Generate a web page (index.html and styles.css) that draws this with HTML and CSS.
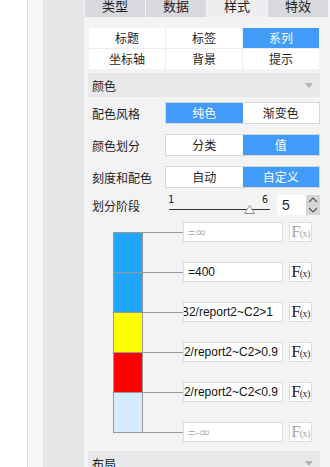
FILE: index.html
```html
<!DOCTYPE html>
<html lang="zh">
<head>
    <meta charset="UTF-8">
    <title>样式 - 系列</title>
    <link rel="stylesheet" href="styles.css">
</head>
<body>
    <div class="rail rail-white"></div>
    <div class="rail rail-rule"></div>
    <div class="rail rail-light"></div>
    <div class="rail rail-gray"></div>

    <div class="panel">
        <div class="tabs">
            <div class="tab">类型</div>
            <div class="tab">数据</div>
            <div class="tab active">样式</div>
            <div class="tab">特效</div>
        </div>

        <div class="panel-body">
            <div class="sub-tabs">
                <div class="sub-tab">标题</div>
                <div class="sub-tab">标签</div>
                <div class="sub-tab active">系列</div>
                <div class="sub-tab">坐标轴</div>
                <div class="sub-tab">背景</div>
                <div class="sub-tab">提示</div>
            </div>

            <div class="section-head">
                <span>颜色</span>
                <span class="caret"></span>
            </div>

            <div class="form-row">
                <span class="form-label">配色风格</span>
                <div class="toggle">
                    <span class="toggle-item active">纯色</span>
                    <span class="toggle-item">渐变色</span>
                </div>
            </div>
            <div class="form-row">
                <span class="form-label">颜色划分</span>
                <div class="toggle">
                    <span class="toggle-item">分类</span>
                    <span class="toggle-item active">值</span>
                </div>
            </div>
            <div class="form-row">
                <span class="form-label">刻度和配色</span>
                <div class="toggle">
                    <span class="toggle-item">自动</span>
                    <span class="toggle-item active">自定义</span>
                </div>
            </div>

            <div class="form-row stage-row">
                <span class="form-label">划分阶段</span>
                <div class="slider">
                    <span class="slider-min">1</span>
                    <span class="slider-max">6</span>
                    <div class="slider-track"></div>
                    <svg class="slider-thumb" width="11" height="9" viewBox="0 0 11 9">
                        <polygon points="5.5,0.5 10.5,8.5 0.5,8.5" fill="#fff" stroke="#8c8c8c"/>
                    </svg>
                </div>
                <div class="spin">
                    <span class="spin-value">5</span>
                    <div class="spin-btns">
                        <svg width="14" height="20" viewBox="0 0 14 20">
                            <polyline points="3,7 7,3 11,7" fill="none" stroke="#555" stroke-width="1.1"/>
                            <polyline points="3,13 7,17 11,13" fill="none" stroke="#555" stroke-width="1.1"/>
                        </svg>
                    </div>
                </div>
            </div>

            <div class="legend">
                <div class="legend-bar">
                    <div class="seg seg-blue"></div>
                    <div class="seg seg-blue"></div>
                    <div class="seg seg-yellow"></div>
                    <div class="seg seg-red"></div>
                    <div class="seg seg-pale"></div>
                </div>
                <div class="legend-stops">
                    <div class="stop">
                        <span class="connector"></span>
                        <div class="stop-input placeholder">=<span class="inf">∞</span></div>
                        <div class="fx disabled">F<small>(x)</small></div>
                    </div>
                    <div class="stop">
                        <span class="connector"></span>
                        <div class="stop-input">=400</div>
                        <div class="fx">F<small>(x)</small></div>
                    </div>
                    <div class="stop">
                        <span class="connector"></span>
                        <div class="stop-input scrolled wide-pad">=B2/report2~C2&gt;1</div>
                        <div class="fx">F<small>(x)</small></div>
                    </div>
                    <div class="stop">
                        <span class="connector"></span>
                        <div class="stop-input scrolled">=B2/report2~C2&gt;0.9</div>
                        <div class="fx">F<small>(x)</small></div>
                    </div>
                    <div class="stop">
                        <span class="connector"></span>
                        <div class="stop-input scrolled">=B2/report2~C2&lt;0.9</div>
                        <div class="fx">F<small>(x)</small></div>
                    </div>
                    <div class="stop">
                        <span class="connector"></span>
                        <div class="stop-input placeholder">=-<span class="inf">∞</span></div>
                        <div class="fx disabled">F<small>(x)</small></div>
                    </div>
                </div>
            </div>

            <div class="section-head layout-head">
                <span>布局</span>
                <span class="caret"></span>
            </div>
        </div>
    </div>
</body>
</html>
```

FILE: styles.css
```css
body {
    margin: 0;
    padding: 0;
    display: flex;
    height: 467px;
    overflow: hidden;
    background: #fff;
    color: #1e1e1e;
    font-family: "Noto Sans CJK SC", "Liberation Sans", sans-serif;
    font-size: 12px;
}

/* left frame strips */
.rail {
    flex: none;
    height: 100%;
}
.rail-white { width: 27px; background: #fff; }
.rail-rule  { width: 1px;  background: #dedfd8; }
.rail-light { width: 15px; background: #f7f7f5; }
.rail-gray  { width: 41px; background: #e6e6e6; }

.panel {
    flex: 1;
    background: #f3f3f5;
    overflow: hidden;
}

/* top tabs, scrolled partly out of view */
.tabs {
    display: grid;
    grid-template-columns: repeat(4, 60px);
    gap: 1px;
    padding-left: 1px;
    margin-top: -6px;
    height: 23px;
}
.tab {
    background: #d8d9dc;
    text-align: center;
    line-height: 23px;
    font-size: 13px;
}
.tab.active {
    background: #eeeef0;
}

.panel-body {
    padding: 0 10px 0 4px;
}

.sub-tabs {
    display: grid;
    grid-template-columns: repeat(3, 76px);
    grid-auto-rows: 20px;
    gap: 1px;
    margin: 11px 1px 0 1px;
    background: #ececee;
}
.sub-tab {
    background: #fff;
    text-align: center;
    line-height: 20px;
}
.sub-tab.active {
    background: #419bf8;
    color: #fff;
}

.section-head {
    display: flex;
    justify-content: space-between;
    align-items: center;
    height: 24px;
    margin-top: 4px;
    padding-left: 4px;
    background: #e8e8ea;
}
.caret {
    width: 0;
    height: 0;
    margin-right: 7px;
    border-left: 4px solid transparent;
    border-right: 4px solid transparent;
    border-top: 5px solid #b4b4b6;
}
.layout-head {
    margin-top: 9px;
}

.form-row {
    display: flex;
    align-items: center;
    height: 22px;
    margin-top: 10px;
    padding-left: 4px;
}
.section-head + .form-row {
    margin-top: 5px;
}
.form-label {
    width: 73px;
    flex: none;
}

.toggle {
    display: grid;
    grid-template-columns: 1fr 1fr;
    width: 155px;
    height: 22px;
    box-sizing: border-box;
    border: 1px solid #d6d6d8;
    background: #fff;
}
.toggle-item {
    text-align: center;
    line-height: 20px;
}
.toggle-item.active {
    background: #419bf8;
    color: #fff;
}

/* stage slider + number spinner */
.stage-row {
    margin-top: 7px;
    height: 20px;
}
.slider {
    position: relative;
    width: 102px;
    height: 20px;
    margin-left: 3px;
}
.slider-min,
.slider-max {
    position: absolute;
    top: 0;
    font-family: "DejaVu Sans Mono", monospace;
    font-size: 10px;
    line-height: 10px;
}
.slider-min { left: 0; }
.slider-max { right: 2px; }
.slider-track {
    position: absolute;
    left: 1px;
    right: 0;
    top: 14px;
    height: 1px;
    background: #333;
}
.slider-thumb {
    position: absolute;
    left: 76px;
    top: 10px;
}
.spin {
    display: flex;
    margin-left: 7px;
    height: 20px;
}
.spin-value {
    width: 29px;
    box-sizing: border-box;
    padding-left: 5px;
    background: #fff;
    font-family: "Liberation Sans", sans-serif;
    font-size: 14px;
    line-height: 20px;
}
.spin-btns {
    width: 14px;
    background: #d6d6d8;
}
.spin-btns svg {
    display: block;
}

/* colour scale legend */
.legend {
    display: flex;
    margin-top: 7px;
}
.legend-bar {
    width: 30px;
    margin: 10px 0 0 25px;
    box-sizing: border-box;
    border-left: 1px solid #999;
    border-right: 1px solid #999;
    align-self: flex-start;
}
.seg {
    height: 40px;
    box-sizing: border-box;
    border-top: 1px solid #999;
}
.seg:last-child {
    height: 41px;
    border-bottom: 1px solid #999;
}
.seg-blue   { background: #22a5fd; }
.seg-yellow { background: #ffff00; }
.seg-red    { background: #ff0000; }
.seg-pale   { background: #d6ebfd; }

.legend-stops {
    display: flex;
    flex-direction: column;
    gap: 20px;
}
.stop {
    display: flex;
    align-items: center;
    height: 20px;
}
.connector {
    width: 40px;
    height: 1px;
    background: #9a9a9a;
}
.stop-input {
    width: 100px;
    height: 20px;
    box-sizing: border-box;
    padding: 0 4px;
    border: 1px solid #dcdcde;
    background: #fff;
    overflow: hidden;
    white-space: nowrap;
    font-family: "Liberation Sans", sans-serif;
    font-size: 12px;
    line-height: 18px;
    color: #111;
}
.stop-input.scrolled {
    display: flex;
    justify-content: flex-end;
}
.stop-input.wide-pad {
    padding-right: 9px;
}
.stop-input.placeholder {
    color: #b0b0b0;
}
.inf {
    font-family: "DejaVu Sans", sans-serif;
    font-size: 14px;
}
.fx {
    width: 23px;
    height: 20px;
    margin-left: 6px;
    box-sizing: border-box;
    border: 1px solid #dcdcde;
    background: #fff;
    text-align: center;
    font-family: "Liberation Serif", serif;
    font-size: 17px;
    line-height: 18px;
    color: #222;
    letter-spacing: -1px;
}
.fx small {
    font-size: 10px;
    letter-spacing: -0.5px;
}
.fx.disabled {
    color: #a6a6a6;
}
```
